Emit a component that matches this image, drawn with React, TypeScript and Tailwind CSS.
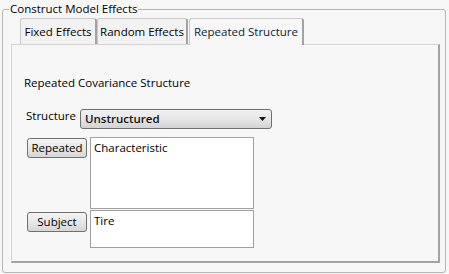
import React from "react";

const font = "font-['Open_Sans','Liberation_Sans',Arial,sans-serif]";

const Tab: React.FC<{ label: string; w: string; active?: boolean }> = ({ label, w, active }) => (
  <div
    className={`${w} h-[26px] flex items-center justify-center rounded-t-[3px] border-l border-t border-l-[#c9c9c9] border-t-[#c9c9c9] border-r-2 border-r-[#a3a3a3] ${
      active ? "bg-[#f7f7f7] -mb-[1px] h-[27px] relative z-10 text-[#0c1a3a]" : "bg-[#f2f2f2] text-black"
    }`}
  >
    {label}
  </div>
);

const Button: React.FC<{ label: string }> = ({ label }) => (
  <button className="w-[60px] h-[20px] shrink-0 rounded-[3px] border border-[#707070] bg-gradient-to-b from-[#f4f4f4] via-[#e8e8e8] to-[#d6d6d6] text-[11.5px] leading-none text-black">
    {label}
  </button>
);

export default function App() {
  return (
    <div className={`w-[449px] h-[274px] bg-[#f7f7f7] pl-[2px] pt-[1px] text-[11.5px] text-black ${font}`}>
      <fieldset className="w-[444px] h-[272px] border border-[#b5b5b5] rounded-[3px] pl-[8px] pr-[5px] pb-[9px]">
        <legend className="-ml-[2px] px-[1px] h-[16px] leading-[16px] text-black">Construct Model Effects</legend>

        {/* tab strip */}
        <div className="flex pl-[9px] mt-[1px] items-end">
          <Tab label="Fixed Effects" w="w-[77px]" />
          <Tab label="Random Effects" w="w-[91px]" />
          <div className="w-[1px]" />
          <Tab label="Repeated Structure" w="w-[115px]" active />
        </div>

        {/* panel */}
        <div className="w-[429px] h-[219px] bg-[#f7f7f7] border-l border-t border-l-[#d4d4d4] border-t-[#d4d4d4] border-r-2 border-b-2 border-r-[#a3a3a3] border-b-[#a3a3a3] pl-[12px] pt-[30px]">
          <div className="h-[16px] leading-[16px]">Repeated Covariance Structure</div>

          <div className="flex items-start mt-[17px] pl-[2px]">
            <div className="w-[54px] h-[16px] leading-[16px]">Structure</div>
            <div className="mt-[1px] w-[192px] h-[20px] rounded-[3px] border border-[#707070] bg-gradient-to-b from-[#f2f2f2] via-[#e6e6e6] to-[#d3d3d3] flex items-center justify-between pl-[4px] pr-[5px]">
              <span className="font-semibold text-[#111]">Unstructured</span>
              <svg width="7" height="4" viewBox="0 0 7 4">
                <path d="M0 0h7L3.5 4z" fill="#111" />
              </svg>
            </div>
          </div>

          <div className="flex flex-col gap-[1px] mt-[8px] pl-[3px]">
            <div className="flex items-start gap-[3px]">
              <div className="mt-[1px]">
                <Button label="Repeated" />
              </div>
              <div className="w-[164px] h-[72px] bg-white border border-[#a0a0a0] px-[3px] pt-[2px] leading-[16px]">
                Characteristic
              </div>
            </div>
            <div className="flex items-start gap-[3px]">
              <div className="mt-[2px]">
                <Button label="Subject" />
              </div>
              <div className="w-[164px] h-[38px] bg-white border border-[#a0a0a0] px-[3px] pt-[2px] leading-[16px]">
                Tire
              </div>
            </div>
          </div>
        </div>
      </fieldset>
    </div>
  );
}
